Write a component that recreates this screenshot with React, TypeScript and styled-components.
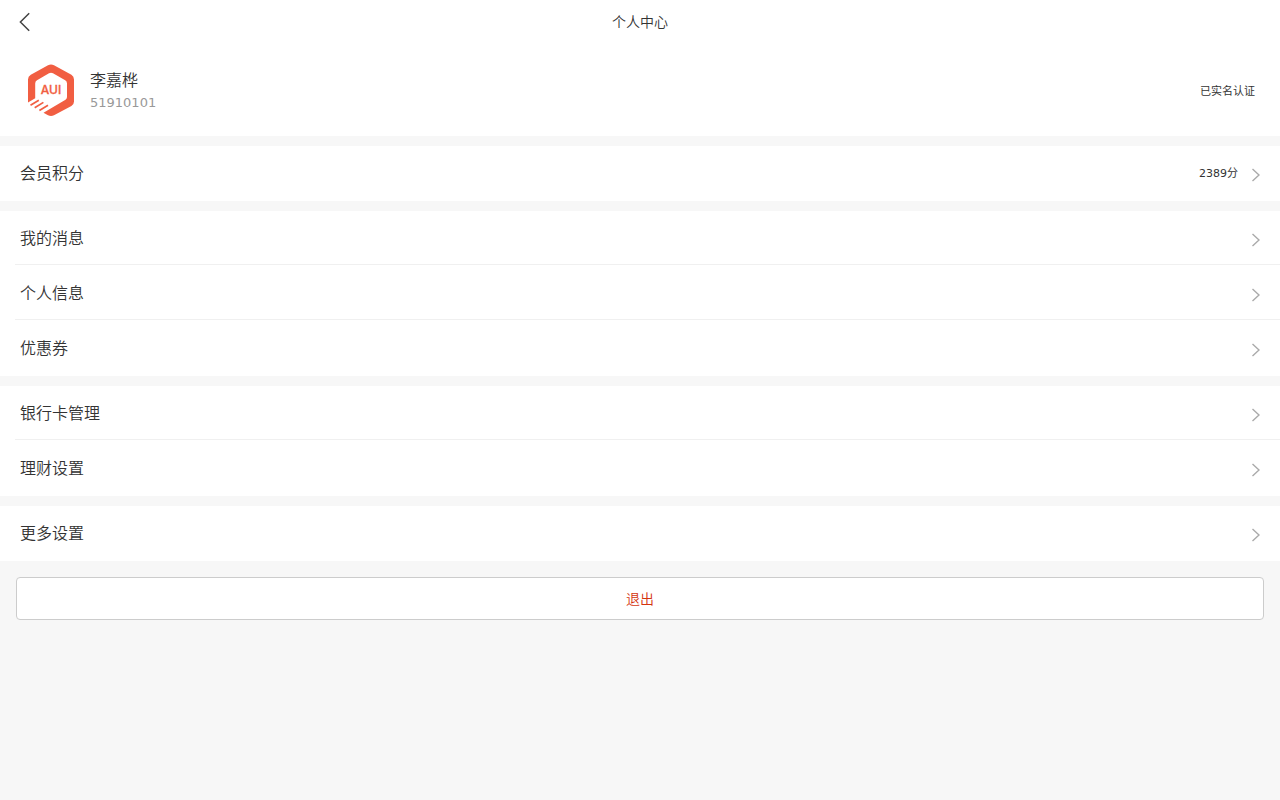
import React from 'react';
import styled, { createGlobalStyle } from 'styled-components';

const GlobalStyle = createGlobalStyle`
  *, *::before, *::after { box-sizing: border-box; }
  body {
    margin: 0;
    background: #f7f7f7;
    color: #333;
    font-family: "DejaVu Sans", "Noto Sans CJK SC", sans-serif;
    font-size: 14px;
    font-weight: 350;
  }
`;

const Header = styled.header`
  display: grid;
  grid-template-columns: 44px 1fr 44px;
  align-items: center;
  height: 44px;
  background: #fff;
`;

const BackButton = styled.button`
  display: flex;
  align-items: center;
  height: 44px;
  padding: 0 0 0 16px;
  border: 0;
  background: none;
  color: #444;
  cursor: pointer;
`;

const Title = styled.h1`
  margin: 0;
  font-size: 14px;
  font-weight: 350;
  line-height: 44px;
  text-align: center;
`;

const Profile = styled.section`
  display: flex;
  align-items: center;
  height: 92px;
  padding: 0 25px 0 20px;
  background: #fff;
`;

const Identity = styled.div`
  flex: 1;
  padding: 2px 0 0 10px;
`;

const Name = styled.h2`
  margin: 0;
  font-size: 16px;
  font-weight: 350;
  line-height: 24px;
`;

const Account = styled.p`
  margin: 0;
  color: #999;
  font-size: 13px;
  font-weight: 400;
  line-height: 20px;
`;

const Note = styled.span`
  font-size: 11px;
  font-weight: 400;
`;

const Group = styled.nav`
  margin-top: 10px;
  background: #fff;
`;

const Row = styled.a`
  display: flex;
  align-items: center;
  height: 55px;
  margin-left: 15px;
  padding: 0 20px 4px 5px;
  color: inherit;
  text-decoration: none;

  &:not(:last-child) {
    box-shadow: inset 0 -1px #fff, inset 0 -2px #f0f0f0;
  }
`;

const Label = styled.span`
  flex: 1;
  font-size: 16px;
`;

const Arrow = styled.svg`
  flex: none;
  width: 10px;
  height: 14px;
  margin: 7px 0 0 12px;
`;

const Footer = styled.footer`
  padding: 16px;
`;

const LogoutButton = styled.button`
  display: block;
  width: 100%;
  height: 43px;
  padding: 0 0 2px;
  border: 1px solid #ccc;
  border-radius: 4px;
  background: #fff;
  color: #d4340f;
  font: inherit;
  cursor: pointer;
`;

const LogoText = styled.text`
  font-family: Inter, "Liberation Sans", sans-serif;
  font-size: 12px;
  font-weight: 500;
  stroke: #f15e42;
  stroke-width: 0.3px;
`;

function Logo() {
  return (
    <svg width="60" height="60" viewBox="0 0 60 60" role="img" aria-label="AUI">
      <g fill="#f15e42">
        <path d="M8 42.5V19.5Q8 16.3 10.8 14.7L28 5.2Q31 3.6 34 5.2L51.4 14.8Q54 16.3 54 19.5V41.5Q54 44.5 51.4 46L34 55.2Q31 56.8 28 55.2L23.5 52.7L45.5 39.8Q47 38.8 47 37V23.5Q47 21.3 45.2 20.3L33 13.3Q31 12.2 29 13.3L17 20.3Q15.2 21.4 15.2 23.5V38.2Z" />
        <LogoText x="31" y="34" textAnchor="middle">AUI</LogoText>
      </g>
      <path d="M10.5 45.2L18.8 40.2M14.7 47.8L23.4 42.4M19.4 50.4L28 45.2" fill="none" stroke="#f15e42" strokeWidth="1.7" />
    </svg>
  );
}

interface Item {
  label: string;
  note?: string;
}

const groups: Item[][] = [
  [{ label: '会员积分', note: '2389分' }],
  [{ label: '我的消息' }, { label: '个人信息' }, { label: '优惠券' }],
  [{ label: '银行卡管理' }, { label: '理财设置' }],
  [{ label: '更多设置' }],
];

export default function App() {
  return (
    <>
      <GlobalStyle />
      <Header>
        <BackButton type="button" aria-label="返回">
          <svg width="16" height="20" viewBox="0 0 16 20" fill="none" stroke="currentColor" strokeWidth="1.5">
            <path d="M13.2 1.2L4.4 10L13.2 18.8" />
          </svg>
        </BackButton>
        <Title>个人中心</Title>
      </Header>
      <main>
        <Profile>
          <Logo />
          <Identity>
            <Name>李嘉桦</Name>
            <Account>51910101</Account>
          </Identity>
          <Note>已实名认证</Note>
        </Profile>
        {groups.map((items) => (
          <Group key={items[0].label} aria-label={items[0].label}>
            {items.map(({ label, note }) => (
              <Row key={label} href="#">
                <Label>{label}</Label>
                {note && <Note>{note}</Note>}
                <Arrow viewBox="0 0 10 14" fill="none" stroke="#aaa" strokeWidth="1.4" aria-hidden="true">
                  <path d="M2.5 1L9 7L2.5 13" />
                </Arrow>
              </Row>
            ))}
          </Group>
        ))}
      </main>
      <Footer>
        <LogoutButton type="button">退出</LogoutButton>
      </Footer>
    </>
  );
}
